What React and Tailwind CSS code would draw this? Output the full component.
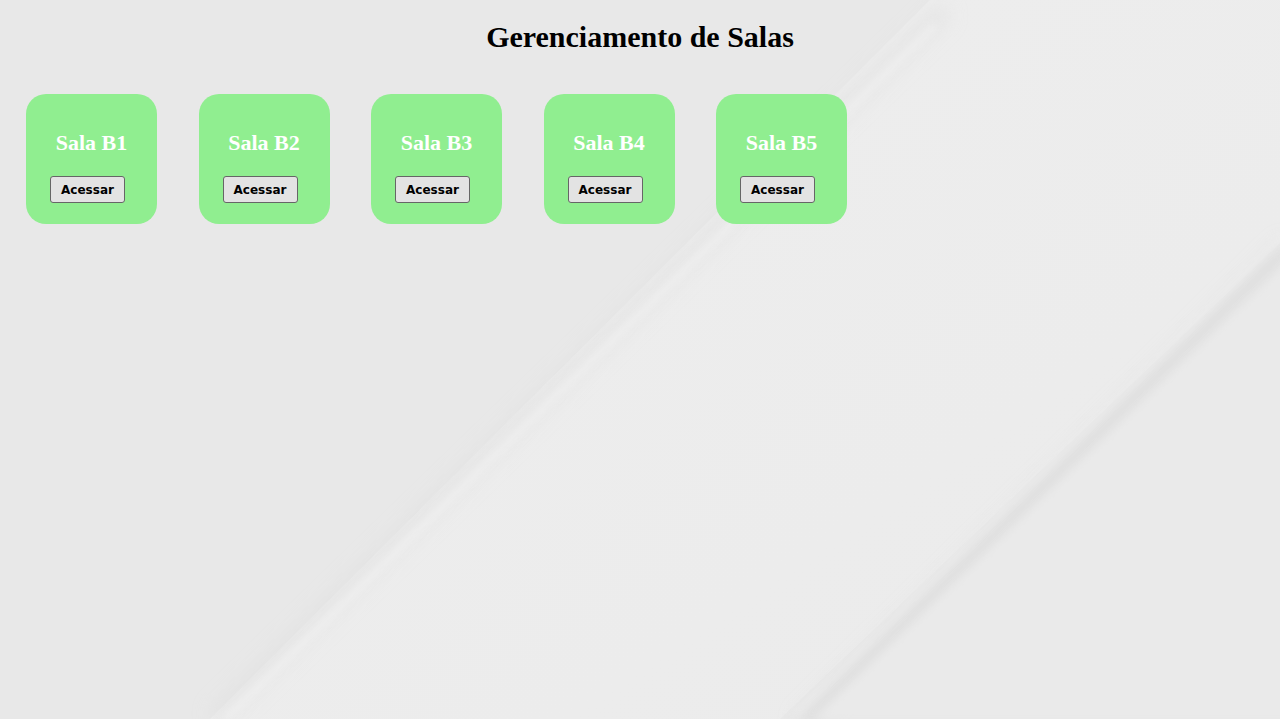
import React from "react";

function Background() {
  return (
    <svg
      className="absolute inset-0 w-full h-full"
      viewBox="0 0 1280 719"
      preserveAspectRatio="none"
      aria-hidden="true"
    >
      <defs>
        <filter id="blur10" x="-20%" y="-20%" width="140%" height="140%">
          <feGaussianBlur stdDeviation="10" />
        </filter>
        <filter id="blur4" x="-20%" y="-20%" width="140%" height="140%">
          <feGaussianBlur stdDeviation="4" />
        </filter>
        <linearGradient id="band" x1="0" y1="0" x2="1" y2="1">
          <stop offset="0" stopColor="#eeeeee" />
          <stop offset="1" stopColor="#ebebeb" />
        </linearGradient>
      </defs>
      <rect x="0" y="0" width="1280" height="719" fill="#e8e8e8" />
      <polygon points="930,0 1280,0 1280,243 780,719 210,719" fill="url(#band)" />
      <line x1="945" y1="10" x2="215" y2="719" stroke="#dddddd" strokeWidth="16" filter="url(#blur10)" opacity="0.6" />
      <line x1="935" y1="25" x2="225" y2="719" stroke="#f3f3f3" strokeWidth="5" filter="url(#blur4)" />
      <line x1="1290" y1="245" x2="800" y2="725" stroke="#d6d6d6" strokeWidth="14" filter="url(#blur10)" opacity="0.7" />
      <line x1="1284" y1="236" x2="794" y2="716" stroke="#f3f3f3" strokeWidth="3" filter="url(#blur4)" />
      <polygon points="1295,255 1295,719 815,719" fill="#eaeaea" filter="url(#blur4)" />
    </svg>
  );
}

function Card({ name }) {
  return (
    <div className="w-[131px] h-[130px] rounded-[20px] bg-[#90ee90] flex flex-col items-center pt-[36px]">
      <h2
        className="text-[22px] leading-[26px] font-bold text-white"
        style={{ fontFamily: '"Liberation Serif", "Times New Roman", serif' }}
      >
        {name}
      </h2>
      <button
        className="mt-[20px] w-[75px] h-[27px] border border-[#666] rounded-[3px] bg-[#e3e3e3] text-[12px] font-bold text-black mr-[8px]"
        style={{ fontFamily: '"DejaVu Sans", Verdana, sans-serif' }}
      >
        Acessar
      </button>
    </div>
  );
}

export default function App() {
  const salas = ["Sala B1", "Sala B2", "Sala B3", "Sala B4", "Sala B5"];
  return (
    <div className="relative w-full h-[719px] overflow-hidden">
      <Background />
      <div className="relative flex flex-col">
        <h1
          className="text-center text-[30px] leading-[36px] font-bold text-black mt-[19px]"
          style={{ fontFamily: '"Liberation Serif", "Times New Roman", serif' }}
        >
          Gerenciamento de Salas
        </h1>
        <div className="flex gap-[41.5px] pl-[26px] mt-[39px]">
          {salas.map((s) => (
            <Card key={s} name={s} />
          ))}
        </div>
      </div>
    </div>
  );
}
